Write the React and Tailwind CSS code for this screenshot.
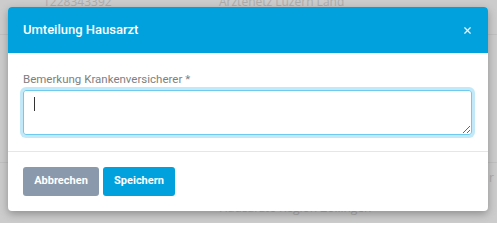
import { X } from 'lucide-react';

function BackgroundTable() {
  return (
    <div className="flex flex-col text-[12px] text-[#d9d9d9] font-['Open_Sans',sans-serif]">
      <div className="h-[36px] flex border-b border-[#f2f2f2] -mt-[1px]">
        <span className="w-[219px] pl-[43px] -mt-[6px]">1228343392</span>
        <span className="-mt-[6px]">Ärztenetz Luzern Land</span>
      </div>
      <div className="h-[128px] border-b border-[#f2f2f2]" />
      <div className="flex">
        <span className="w-[219px]" />
        <span className="pt-[36px]">Hausärzte Region Zollingen</span>
        <span className="ml-auto pr-[3px] pt-[6px]">r</span>
      </div>
    </div>
  );
}

function App() {
  return (
    <div className="relative w-[497px] h-[223px] overflow-hidden bg-white font-['Roboto',sans-serif]">
      <BackgroundTable />

      {/* Overlay */}
      <div className="absolute inset-0 bg-black/20" />

      {/* Modal */}
      <div className="absolute left-[8px] top-[7px] w-[480px] bg-white rounded-[4px] shadow-[0_3px_8px_rgba(0,0,0,0.3)]">
        <div className="h-[46px] bg-[#00a1dc] rounded-t-[4px] flex items-center justify-between pl-[15px] pr-[15px]">
          <h2 className="text-[13px] font-medium text-white">Umteilung Hausarzt</h2>
          <X className="w-[11px] h-[11px] text-white" strokeWidth={2.5} />
        </div>

        <div className="px-[15px] pt-[18px] pb-[16px]">
          <label className="block text-[11.5px] leading-[16px] text-[#808080] mb-[3px]">
            Bemerkung Krankenversicherer *
          </label>
          <div className="relative">
            <textarea
              className="block w-[449px] h-[45px] resize-y rounded-[3px] border border-[#6ccbef] ring-[3px] ring-[#c3e9f8] outline-none px-[10px] pt-[5px] text-[13px] text-[#333]"
            />
            {/* caret */}
            <span className="absolute left-[11px] top-[7px] w-px h-[14px] bg-[#333]" />
          </div>
        </div>

        <div className="border-t border-[#e6e6e6] px-[15px] pt-[15px] pb-[15px] flex gap-[4px]">
          <button className="h-[29px] w-[76px] rounded-[3px] bg-[#8a99ab] text-white text-[11px] font-bold">
            Abbrechen
          </button>
          <button className="h-[29px] w-[72px] rounded-[3px] bg-[#00a1dc] text-white text-[11px] font-bold">
            Speichern
          </button>
        </div>
      </div>
    </div>
  );
}

export default App;
